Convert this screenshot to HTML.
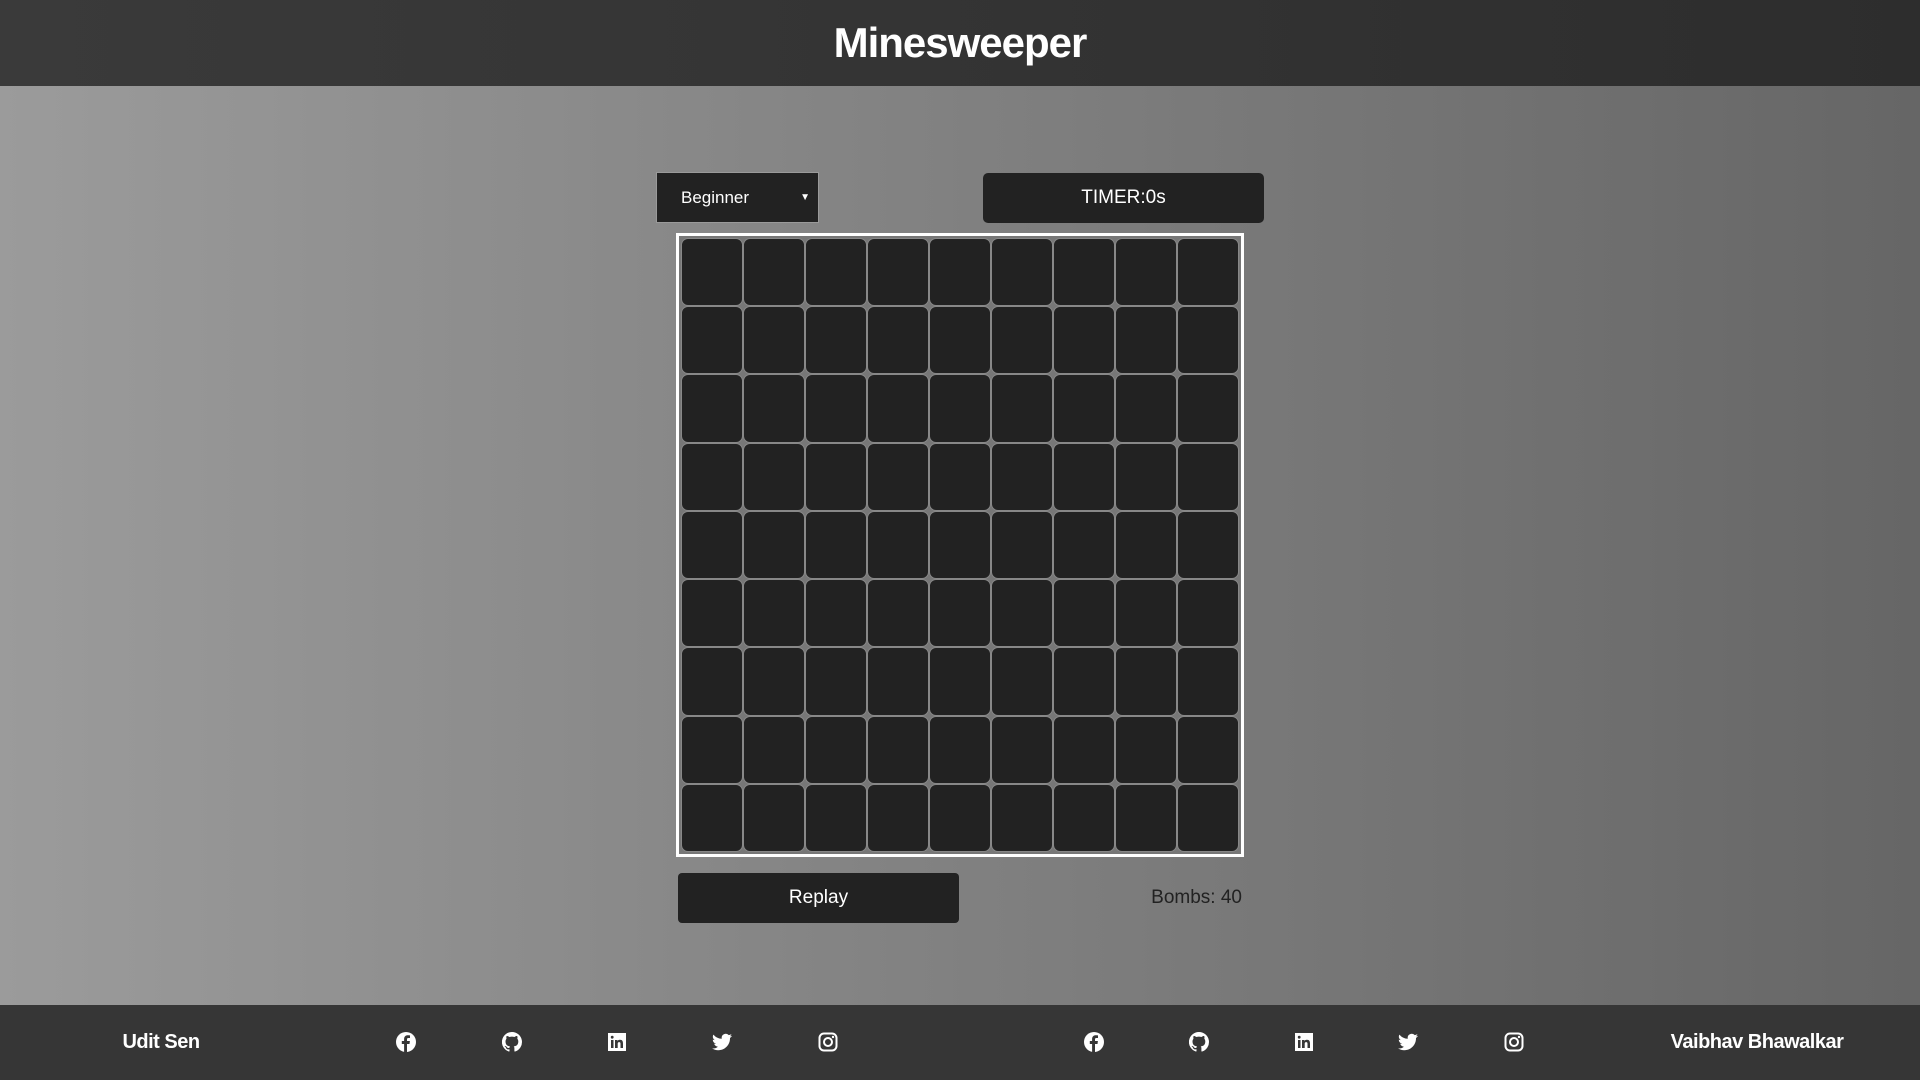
<!DOCTYPE html>
<html style="overflow:hidden;width:1920px;height:1080px"><head><meta charset="utf-8">
<style>
*{box-sizing:border-box;margin:0;padding:0}
body{width:1920px;height:1080px;overflow:hidden;position:relative;font-family:"Liberation Sans",sans-serif;}
.hdr{position:absolute;left:0;top:0;width:1920px;height:86px;background:linear-gradient(90deg,#3a3a3a,#2d2d2d);color:#fff;text-align:center;font-weight:bold;font-size:42px;line-height:86px;letter-spacing:-1px}
.main{position:absolute;left:0;top:86px;width:1920px;height:919px;background:linear-gradient(90deg,#9b9b9b,#666)}
.sel{position:absolute;left:656px;top:172px;width:163px;height:51px;background:#222;border:1px solid #9a9a9a;color:#fff;font-size:17px;line-height:49px;padding-left:24px}
.sel span{position:absolute;right:8px;top:0;font-size:10px}
.timer{position:absolute;left:983px;top:173px;width:281px;height:50px;background:#222;border-radius:5px;color:#fff;font-size:19px;line-height:50px;text-align:center}
.board{position:absolute;left:676px;top:233px;width:568px;height:624px;border:3px solid #fff;background:#777;padding:2px;display:grid;grid-template-columns:repeat(9,1fr);grid-template-rows:repeat(9,1fr)}
.board div{background:#222;border:1px solid #888;border-radius:7px}
.replay{position:absolute;left:678px;top:873px;width:281px;height:50px;background:#222;border-radius:4px;color:#fff;font-size:19px;line-height:50px;text-align:center}
.bombs{position:absolute;right:678px;top:873px;height:50px;line-height:50px;font-size:19px;color:#222}
.ftr{position:absolute;left:0;top:1005px;width:1920px;height:75px;background:#363636;color:#fff;overflow:hidden}
.nm{position:absolute;top:0;line-height:75px;font-weight:bold;font-size:20px;transform:translateX(-50%);letter-spacing:-0.5px;white-space:nowrap}
.ic{position:absolute;top:27px;width:20px;height:20px;margin-left:-10px}
</style></head><body>
<div class="hdr">Minesweeper</div>
<div class="main"></div>
<div class="sel">Beginner<span>▼</span></div>
<div class="timer">TIMER:0s</div>
<div class="board">
<div></div><div></div><div></div><div></div><div></div><div></div><div></div><div></div><div></div>
<div></div><div></div><div></div><div></div><div></div><div></div><div></div><div></div><div></div>
<div></div><div></div><div></div><div></div><div></div><div></div><div></div><div></div><div></div>
<div></div><div></div><div></div><div></div><div></div><div></div><div></div><div></div><div></div>
<div></div><div></div><div></div><div></div><div></div><div></div><div></div><div></div><div></div>
<div></div><div></div><div></div><div></div><div></div><div></div><div></div><div></div><div></div>
<div></div><div></div><div></div><div></div><div></div><div></div><div></div><div></div><div></div>
<div></div><div></div><div></div><div></div><div></div><div></div><div></div><div></div><div></div>
<div></div><div></div><div></div><div></div><div></div><div></div><div></div><div></div><div></div>
</div>
<div class="replay">Replay</div>
<div class="bombs">Bombs: 40</div>
<div class="ftr">
<div class="nm" style="left:161px">Udit Sen</div>
<div class="nm" style="left:1757px">Vaibhav Bhawalkar</div>
<svg width="0" height="0" style="position:absolute">
<defs>
<symbol id="fb" viewBox="0 0 20 20"><circle cx="10" cy="10" r="10" fill="#fff"/><path d="M11 20V12h2.5l.4-3H11V7.3c0-.8.3-1.3 1.4-1.3H14V3.4c-.3 0-1.2-.1-2.2-.1-2.2 0-3.7 1.3-3.7 3.8V9H5.8v3h2.3v8z" fill="#363636"/></symbol>
<symbol id="gh" viewBox="0 0 20 20"><path d="M10 0a10 10 0 0 0-3.2 19.5c.5.1.7-.2.7-.5v-1.7c-2.8.6-3.4-1.3-3.4-1.3-.5-1.2-1.100-1.5-1.1-1.5-.9-.6.1-.6.1-.6 1 .1 1.5 1 1.5 1 .9 1.5 2.3 1.1 2.9.8.1-.6.3-1.1.6-1.3-2.2-.3-4.6-1.1-4.6-5 0-1.1.4-2 1-2.7-.1-.3-.4-1.3.1-2.7 0 0 .8-.3 2.8 1a9.6 9.6 0 0 1 5 0c1.9-1.3 2.8-1 2.8-1 .5 1.4.2 2.4.1 2.7.6.7 1 1.6 1 2.7 0 3.9-2.3 4.7-4.6 5 .4.3.7.9.7 1.9V19c0 .3.2.6.7.5A10 10 0 0 0 10 0z" fill="#fff"/></symbol>
<symbol id="li" viewBox="0 0 20 20"><rect x="1" y="1" width="18" height="18" fill="#fff"/><path d="M4 8h2.5v8H4zM5.2 3.8a1.4 1.4 0 1 1 0 2.8 1.4 1.4 0 0 1 0-2.8zM8 8h2.4v1.1c.4-.7 1.2-1.3 2.5-1.3 2.6 0 3.1 1.7 3.1 3.9V16h-2.5v-3.8c0-.9 0-2.1-1.3-2.1s-1.5 1-1.5 2V16H8z" fill="#363636"/></symbol>
<symbol id="tw" viewBox="0 0 20 20"><path d="M20 3.8c-.7.3-1.5.5-2.4.6.9-.5 1.5-1.3 1.8-2.3-.8.5-1.7.8-2.6 1a4.1 4.1 0 0 0-7 3.7A11.6 11.6 0 0 1 1.4 2.6a4.1 4.1 0 0 0 1.3 5.5c-.7 0-1.3-.2-1.9-.5 0 2 1.4 3.7 3.3 4.1-.6.2-1.2.2-1.9.1.5 1.6 2 2.8 3.8 2.9A8.2 8.2 0 0 1 0 16.4 11.6 11.6 0 0 0 6.3 18.2c7.5 0 11.7-6.3 11.7-11.7v-.5c.8-.6 1.5-1.3 2-2.2z" fill="#fff"/></symbol>
<symbol id="ig" viewBox="0 0 20 20"><rect x="1.5" y="1.5" width="17" height="17" rx="4.5" fill="none" stroke="#fff" stroke-width="2"/><circle cx="10" cy="10" r="4" fill="none" stroke="#fff" stroke-width="2"/><circle cx="15" cy="5" r="1.2" fill="#fff"/></symbol>
</defs></svg>
<svg class="ic" style="left:406px"><use href="#fb"/></svg>
<svg class="ic" style="left:512px"><use href="#gh"/></svg>
<svg class="ic" style="left:617px"><use href="#li"/></svg>
<svg class="ic" style="left:722px"><use href="#tw"/></svg>
<svg class="ic" style="left:828px"><use href="#ig"/></svg>
<svg class="ic" style="left:1094px"><use href="#fb"/></svg>
<svg class="ic" style="left:1199px"><use href="#gh"/></svg>
<svg class="ic" style="left:1304px"><use href="#li"/></svg>
<svg class="ic" style="left:1408px"><use href="#tw"/></svg>
<svg class="ic" style="left:1514px"><use href="#ig"/></svg>
</div>
</body></html>
